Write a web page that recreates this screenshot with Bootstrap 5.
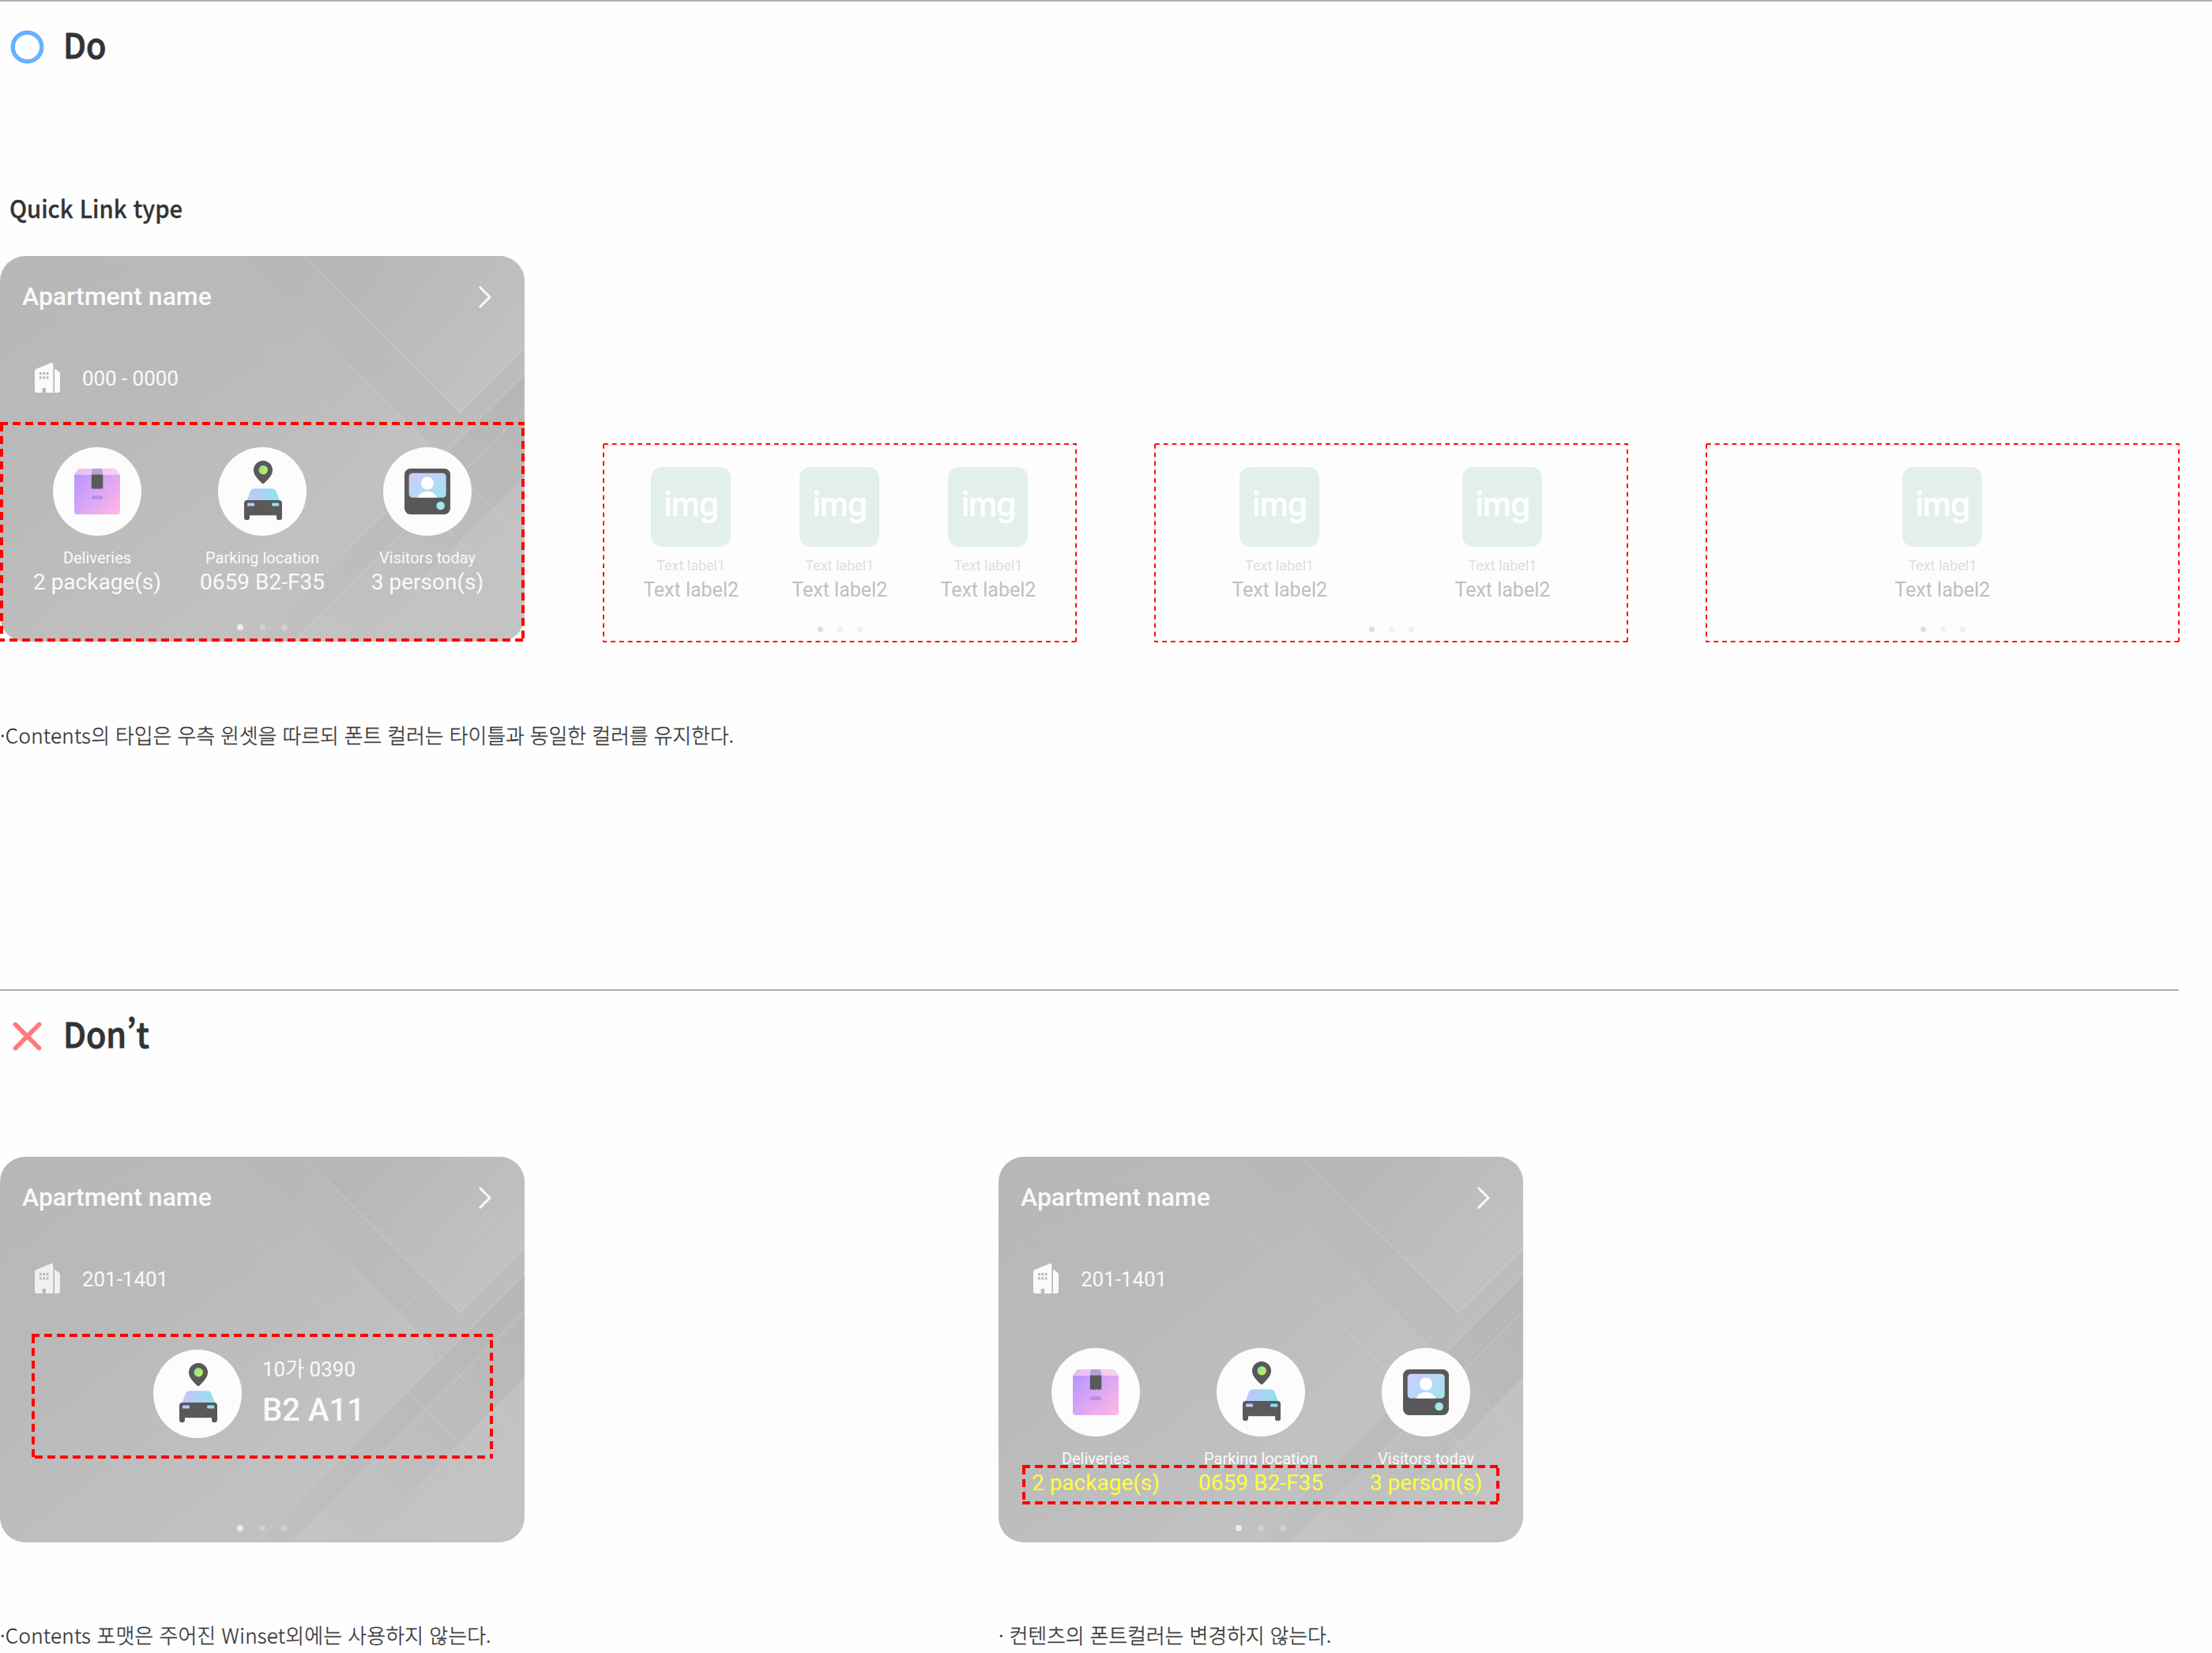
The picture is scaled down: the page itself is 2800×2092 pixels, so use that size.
<!DOCTYPE html>
<html lang="ko">
<head>
<meta charset="utf-8">
<title>Quick Link type</title>
<link href="https://cdn.jsdelivr.net/npm/bootstrap@5.3.0/dist/css/bootstrap.min.css" rel="stylesheet">
<style>
body{width:2800px;height:2092px;overflow:hidden;background:#fefefe;color:#333;font-family:"Noto Sans CJK KR",sans-serif}
.rule-top{border-top:2px solid #b0b0b0}
.do-part{height:1252px}
.dont-part{width:2758px;height:840px}
.part-head{height:90px;padding:23px 0 0 13px;gap:24px}
.part-head h1{font-size:44px;line-height:60px;font-weight:500;margin:0;transform:scaleX(.94);transform-origin:0 50%;-webkit-text-stroke:.9px #333}
.part-head svg{margin-top:13px}
.sub-head{width:max-content;font-size:31px;line-height:40px;font-weight:500;margin:151px 0 0 12px;transform:scaleX(.943);transform-origin:0 50%;-webkit-text-stroke:.3px #333}
.note{font-size:26px;line-height:40px;font-weight:300;margin:0;white-space:nowrap;letter-spacing:-.17px;-webkit-text-stroke:.3px #333}
.latin{letter-spacing:.3px}
.tile{position:relative;width:664px;height:488px;border-radius:32px;color:#fafafa;font-family:Roboto,"Noto Sans CJK KR",sans-serif}
.tile-bg{position:absolute;inset:0;border-radius:32px}
.tile-body{position:relative;height:100%}
.tile-head{height:104px;padding:0 42px 0 28px}
.tile-head h2{font-size:32px;line-height:40px;font-weight:500;margin:0 0 2px;letter-spacing:-.05px}
.unit-row{height:60px;padding-left:44px;gap:28px;margin-top:20px}
.unit-row span{font-size:26px;line-height:40px;padding-top:2px;letter-spacing:-.05px}
.quick{padding:0 18.5px;margin-top:58px}
.quick-item{width:209px}
.lbl{font-size:20px;line-height:24px;margin-top:16px}
.val{font-size:28px;line-height:32px;margin-top:3px}
.yel{color:#ffff3a}
.pager{gap:20px}
.pager i{width:8px;height:8px;border-radius:50%;background:#d0d0d0}
.pager i:first-child{background:#ebebeb}
.frame{position:absolute;overflow:visible;fill:none;stroke:#f00;stroke-width:4;stroke-dasharray:10 6}
.winset{position:relative;width:600px;height:252px;background:#fdfdfd;border-radius:0 0 28px 28px;font-family:Roboto,sans-serif}
.winset .frame{inset:0;stroke:#ff0d0d;stroke-width:2;stroke-dasharray:5.8 5}
.slots{padding:30px 18px 0 17.500px}
.ph{width:101px;height:101px;border-radius:14px;background:#e3f0e9;color:#fff;font:500 41px/94px Inter,sans-serif;letter-spacing:-1.2px;-webkit-text-stroke:.4px #fff}
.l1{font-size:18px;line-height:22px;color:#dedede;margin-top:13px}
.l2{font-size:25px;line-height:30px;color:#bfbfbf;margin-top:5px}
.winset .pager{gap:18px;margin-top:30.500px}
.winset .pager i{width:7px;height:7px;background:#f0f0f0}
.winset .pager i:first-child{background:#ddd}
.plate{font-size:26px;line-height:32px}
.spot{font-size:40px;line-height:48px;font-weight:500}
</style>
<script src="https://cdn.jsdelivr.net/npm/bootstrap@5.3.0/dist/js/bootstrap.bundle.min.js"></script>
</head>
<body>
<svg width="0" height="0" class="position-absolute" aria-hidden="true">
  <defs>
    <linearGradient id="gBase" x1="0" y1="0" x2="1" y2="1"><stop offset="0" stop-color="#b7b7b7"/><stop offset=".35" stop-color="#bababa"/><stop offset=".65" stop-color="#c0c0c0"/><stop offset="1" stop-color="#c4c4c4"/></linearGradient>
    <linearGradient id="gTri" x1="470" y1="0" x2="640" y2="150" gradientUnits="userSpaceOnUse"><stop offset="0" stop-color="#b7b7b7"/><stop offset="1" stop-color="#c2c2c2"/></linearGradient>
    <linearGradient id="gDark" x1="664" y1="150" x2="340" y2="488" gradientUnits="userSpaceOnUse"><stop offset="0" stop-color="#b6b6b6"/><stop offset="1" stop-color="#c0c0c0"/></linearGradient>
    <linearGradient id="gDark2" x1="664" y1="200" x2="420" y2="488" gradientUnits="userSpaceOnUse"><stop offset="0" stop-color="#b7b7b7"/><stop offset="1" stop-color="#c3c3c3"/></linearGradient>
    <linearGradient id="gBand" x1="330" y1="0" x2="570" y2="230" gradientUnits="userSpaceOnUse"><stop offset="0" stop-color="#b7b7b7"/><stop offset="1" stop-color="#bdbdbd"/></linearGradient>
    <linearGradient id="gBox" x1="0" y1=".1" x2="1" y2=".9"><stop offset="0" stop-color="#b898ff"/><stop offset="1" stop-color="#ffb5e6"/></linearGradient>
    <linearGradient id="gLid" x1="0" y1="0" x2="1" y2="0"><stop offset="0" stop-color="#e3bdf8"/><stop offset="1" stop-color="#ffcdf0"/></linearGradient>
    <linearGradient id="gRoof" x1="0" y1="0" x2="1" y2="0"><stop offset="0" stop-color="#c6c4ff"/><stop offset="1" stop-color="#8fe3ea"/></linearGradient>
    <linearGradient id="gScreen" x1="0" y1="0" x2="1" y2="1"><stop offset="0" stop-color="#d2c8ff"/><stop offset="1" stop-color="#9de7ee"/></linearGradient>
    <linearGradient id="gPin" x1="0" y1="0" x2="1" y2=".6"><stop offset="0" stop-color="#78e5a8"/><stop offset="1" stop-color="#c6f04e"/></linearGradient>
    <linearGradient id="gEdge" x1="384" y1="0" x2="582" y2="197" gradientUnits="userSpaceOnUse"><stop offset="0" stop-color="#bfbfbf"/><stop offset="1" stop-color="#cacaca"/></linearGradient>
  </defs>
  <symbol id="bg" viewBox="0 0 664 488">
    <rect width="664" height="488" fill="url(#gBase)"/>
    <path d="M305 0H384L582 197L561 256Z" fill="url(#gBand)"/>
    <path d="M384 0H664V115L582 197Z" fill="url(#gTri)"/>
    <path d="M664 115V149L553 260L545 240L561 219L582 197Z" fill="#bdbdbd"/>
    <path d="M664 149V195L371 488H325Z" fill="url(#gDark)"/>
    <path d="M664 195V279L455 488H371Z" fill="url(#gDark2)"/>
    <path d="M502 197L545 240L297 488H212Z" fill="#c4c4c4" opacity=".25"/>
    <path d="M384 0L582 197L664 115" fill="none" stroke="url(#gEdge)" stroke-width="1.500"/>
    <g fill="none" stroke="#cbcbcb" stroke-width="1.500" opacity=".6">
      <path d="M664 149L325 488M664 195L371 488"/>
      <path d="M440 135L664 359M434 214L664 444" opacity=".9"/>
    </g>
    <g fill="none" stroke="#c4c4c4" stroke-width="2">
      <path d="M305 0L440 135M280 60L434 214" opacity=".35"/>
      <path d="M642 61L380 323" stroke-width="3" opacity=".45"/>
      <path d="M380 323L212 488" opacity=".3"/>
    </g>
  </symbol>
  <symbol id="building" viewBox="0 0 32 38">
    <path fill="currentColor" fill-rule="evenodd" d="M0 10.500Q0 8.700 1.600 8L20.500.3Q23.300-.6 23.300 2.200V38H14V32H9.700V38H3Q0 38 0 35ZM6 12V15.300H8.700V12ZM10.300 12V15.300H13V12ZM14.700 12V15.300H17.400V12ZM6 17.200V20.600H8.700V17.200ZM10.300 17.200V20.600H13V17.200ZM14.700 17.200V20.600H17.400V17.200Z"/>
    <path fill="currentColor" d="M25 7.500L31 11.800Q32 12.500 32 14V35Q32 38 29 38H25Z"/>
  </symbol>
  <symbol id="parcel" viewBox="0 0 112 112">
    <circle cx="56" cy="56" r="56" fill="#fcfcfc"/>
    <path d="M27 34.500H85V81Q85 85 81 85H31Q27 85 27 81Z" fill="url(#gBox)"/>
    <path d="M27 34.500L31.500 28.500Q32.500 27 34.500 27H77.500Q79.500 27 80.500 28.500L85 34.500Z" fill="url(#gLid)"/>
    <path d="M50 27H62L63.300 34.500H48.800Z" fill="#b69fda"/>
    <path d="M48.800 34.500H63.300V53L61.500 51.800L59.700 53.500L57.900 51.800L56.100 53.500L54.300 51.800L52.500 53.500L50.700 51.800L48.800 53Z" fill="#595959"/>
    <rect x="49" y="61.300" width="14.300" height="4.700" rx="2" fill="#b48fea"/>
  </symbol>
  <symbol id="car" viewBox="0 0 112 112">
    <circle cx="56" cy="56" r="56" fill="#fcfcfc"/>
    <path d="M57 17A12 12 0 0 0 45 29C45 35.500 51 41 55.500 45.500Q57 47 58.500 45.500C63 41 69 35.500 69 29A12 12 0 0 0 57 17Z" fill="#595959"/>
    <circle cx="57.200" cy="28.800" r="5.700" fill="url(#gPin)"/>
    <path d="M36.500 67.500L40.500 56.500Q42 52.300 46.500 52.300H68Q72.500 52.300 74 56.500L78 67.500Z" fill="url(#gRoof)"/>
    <path d="M37 67H77Q81 67 81 71V89Q81 92.300 77.500 92.300Q74 92.300 74 89V86.300H40V89Q40 92.300 36.500 92.300Q33 92.300 33 89V71Q33 67 37 67Z" fill="#595959"/>
    <rect x="37" y="70.600" width="9" height="4" rx="1.200" fill="#c2c3fb"/>
    <rect x="68.200" y="70.600" width="9" height="4" rx="1.200" fill="#93dfec"/>
  </symbol>
  <symbol id="intercom" viewBox="0 0 112 112">
    <circle cx="56" cy="56" r="56" fill="#fcfcfc"/>
    <rect x="27" y="27" width="58" height="58" rx="7.500" fill="#595959"/>
    <rect x="32.700" y="32.700" width="47" height="31" rx="4.500" fill="url(#gScreen)"/>
    <circle cx="56" cy="45.500" r="8" fill="#fff"/>
    <path d="M43.600 63.700C46 58.500 50.500 55.700 56 55.700S66 58.500 68.400 63.700Z" fill="#fff"/>
    <circle cx="72.700" cy="74" r="5.300" fill="#a1e6f0"/>
  </symbol>
  <symbol id="next" viewBox="0 0 16 28">
    <path d="M1.800 1.800L14 14L1.800 26.200" fill="none" stroke="#fafafa" stroke-width="3" stroke-linecap="round" stroke-linejoin="round"/>
  </symbol>
</svg>

<section class="do-part rule-top">
  <header class="part-head d-flex align-items-start">
    <svg width="43" height="43" viewBox="0 0 43 43"><circle cx="21.500" cy="21.500" r="18.300" fill="none" stroke="#67b0ff" stroke-width="5.400"/></svg>
    <h1>Do</h1>
  </header>
  <h2 class="sub-head">Quick Link type</h2>

  <div class="d-flex align-items-start" style="margin-top:41px">
    <article class="tile">
      <svg class="tile-bg" width="664" height="488"><use href="#bg"/></svg>
      <div class="tile-body">
        <div class="tile-head d-flex align-items-center justify-content-between"><h2>Apartment name</h2><svg width="16" height="28"><use href="#next"/></svg></div>
        <div class="unit-row d-flex align-items-center"><svg width="32" height="38"><use href="#building"/></svg><span>000 - 0000</span></div>
        <div class="quick d-flex text-center">
          <div class="quick-item"><svg class="d-block mx-auto" width="112" height="112"><use href="#parcel"/></svg><div class="lbl">Deliveries</div><div class="val">2 package(s)</div></div>
          <div class="quick-item"><svg class="d-block mx-auto" width="112" height="112"><use href="#car"/></svg><div class="lbl">Parking location</div><div class="val">0659 B2-F35</div></div>
          <div class="quick-item"><svg class="d-block mx-auto" width="112" height="112"><use href="#intercom"/></svg><div class="lbl">Visitors today</div><div class="val">3 person(s)</div></div>
        </div>
        <div class="pager d-flex justify-content-center" style="margin-top:37px"><i></i><i></i><i></i></div>
      </div>
      <svg class="frame" style="left:0;top:210px" width="664" height="278"><path d="M0 2H664"/><path d="M662 8V274"/><path d="M-4 276H662"/><path d="M2 2V272"/></svg>
    </article>

    <div class="d-flex" style="gap:98px;margin:237px 0 0 99px">
      <div class="winset">
        <div class="slots d-flex text-center">
          <div class="flex-fill"><div class="ph mx-auto">img</div><div class="l1">Text label1</div><div class="l2">Text label2</div></div>
          <div class="flex-fill"><div class="ph mx-auto">img</div><div class="l1">Text label1</div><div class="l2">Text label2</div></div>
          <div class="flex-fill"><div class="ph mx-auto">img</div><div class="l1">Text label1</div><div class="l2">Text label2</div></div>
        </div>
        <div class="pager d-flex justify-content-center"><i></i><i></i><i></i></div>
        <svg class="frame" width="600" height="252"><path d="M1 1H599V251"/><path d="M1 1V251H599"/></svg>
      </div>
      <div class="winset">
        <div class="slots d-flex text-center">
          <div class="flex-fill"><div class="ph mx-auto">img</div><div class="l1">Text label1</div><div class="l2">Text label2</div></div>
          <div class="flex-fill"><div class="ph mx-auto">img</div><div class="l1">Text label1</div><div class="l2">Text label2</div></div>
        </div>
        <div class="pager d-flex justify-content-center"><i></i><i></i><i></i></div>
        <svg class="frame" width="600" height="252"><path d="M1 1H599V251"/><path d="M1 1V251H599"/></svg>
      </div>
      <div class="winset">
        <div class="slots d-flex text-center">
          <div class="flex-fill"><div class="ph mx-auto">img</div><div class="l1">Text label1</div><div class="l2">Text label2</div></div>
        </div>
        <div class="pager d-flex justify-content-center"><i></i><i></i><i></i></div>
        <svg class="frame" width="600" height="252"><path d="M1 1H599V251"/><path d="M1 1V251H599"/></svg>
      </div>
    </div>
  </div>
  <p class="note" style="margin-top:97px"><span class="latin">·Contents</span>의 타입은 우측 윈셋을 따르되 폰트 컬러는 타이틀과 동일한 컬러를 유지한다.</p>
</section>

<section class="dont-part rule-top">
  <header class="part-head d-flex align-items-start">
    <svg width="43" height="43" viewBox="0 0 43 43"><path d="M6.500 6.500L36.500 36.500M36.500 6.500L6.500 36.500" fill="none" stroke="#ff7a7a" stroke-width="5.800" stroke-linecap="round"/></svg>
    <h1>Don’t</h1>
  </header>
  <div class="d-flex" style="gap:600px;margin-top:120px">
    <div style="width:664px">
      <article class="tile">
        <svg class="tile-bg" width="664" height="488"><use href="#bg"/></svg>
        <div class="tile-body">
          <div class="tile-head d-flex align-items-center justify-content-between"><h2>Apartment name</h2><svg width="16" height="28"><use href="#next"/></svg></div>
          <div class="unit-row d-flex align-items-center"><svg width="32" height="38" opacity=".85"><use href="#building"/></svg><span>201-1401</span></div>
          <div class="d-flex" style="margin:60px 0 0 194px;gap:26px">
            <svg width="112" height="112"><use href="#car"/></svg>
            <div style="padding-top:9px"><div class="plate">10가 0390</div><div class="spot" style="margin-top:12px">B2 A11</div></div>
          </div>
          <div class="pager d-flex justify-content-center" style="margin-top:110px"><i></i><i></i><i></i></div>
        </div>
        <svg class="frame" style="left:40px;top:224px" width="584" height="158"><path d="M0 2H584"/><path d="M582 8V158"/><path d="M4 156H584"/><path d="M2 2V156"/></svg>
      </article>
      <p class="note" style="margin-top:97px;letter-spacing:0"><span class="latin">·Contents</span> 포맷은 주어진 <span class="latin">Winset</span>외에는 사용하지 않는다.</p>
    </div>
    <div style="width:664px">
      <article class="tile">
        <svg class="tile-bg" width="664" height="488"><use href="#bg"/></svg>
        <div class="tile-body">
          <div class="tile-head d-flex align-items-center justify-content-between"><h2>Apartment name</h2><svg width="16" height="28"><use href="#next"/></svg></div>
          <div class="unit-row d-flex align-items-center"><svg width="32" height="38"><use href="#building"/></svg><span>201-1401</span></div>
          <div class="quick d-flex text-center">
            <div class="quick-item"><svg class="d-block mx-auto" width="112" height="112"><use href="#parcel"/></svg><div class="lbl">Deliveries</div><div class="val yel">2 package(s)</div></div>
            <div class="quick-item"><svg class="d-block mx-auto" width="112" height="112"><use href="#car"/></svg><div class="lbl">Parking location</div><div class="val yel">0659 B2-F35</div></div>
            <div class="quick-item"><svg class="d-block mx-auto" width="112" height="112"><use href="#intercom"/></svg><div class="lbl">Visitors today</div><div class="val yel">3 person(s)</div></div>
          </div>
          <div class="pager d-flex justify-content-center" style="margin-top:37px"><i></i><i></i><i></i></div>
        </div>
        <svg class="frame" style="left:30px;top:390px" width="604" height="50"><path d="M0 2H604"/><path d="M602 4V50"/><path d="M0 48H604"/><path d="M2 2V50"/></svg>
      </article>
      <p class="note" style="margin-top:97px">· 컨텐츠의 폰트컬러는 변경하지 않는다.</p>
    </div>
  </div>
</section>
</body>
</html>
